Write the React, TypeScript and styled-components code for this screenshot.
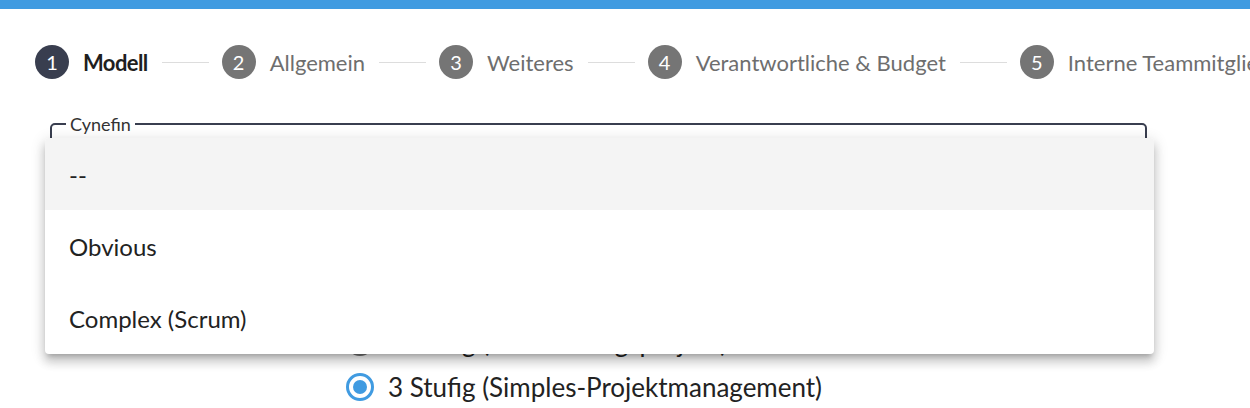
import React from "react";
import styled, { createGlobalStyle } from "styled-components";

const GlobalStyle = createGlobalStyle`
  body {
    margin: 0;
    background: #ffffff;
    font-family: Lato, "Open Sans", "Liberation Sans", sans-serif;
    overflow: hidden;
  }
`;

const TopBar = styled.div`
  height: 9px;
  background: #409be1;
`;

const Stepper = styled.div`
  display: flex;
  align-items: center;
  height: 34px;
  margin-top: 36px;
  padding-left: 35px;
  white-space: nowrap;
`;

const StepCircle = styled.div<{ $active?: boolean }>`
  flex: none;
  width: 34px;
  height: 34px;
  border-radius: 50%;
  display: flex;
  align-items: center;
  justify-content: center;
  background: ${(p) => (p.$active ? "#393e4f" : "#757575")};
  color: #ffffff;
  font-size: 20px;
`;

const StepLabel = styled.span<{ $active?: boolean }>`
  margin-left: 14px;
  font-size: 22px;
  color: ${(p) => (p.$active ? "#1f1f1f" : "#6e6e6e")};
  font-weight: ${(p) => (p.$active ? 700 : 400)};
  letter-spacing: ${(p) => (p.$active ? "-0.6px" : "0")};
`;

const Connector = styled.div`
  flex: none;
  width: 47px;
  height: 1px;
  margin: 0 13px 0 14px;
  background: #dddddd;
`;

const Form = styled.div`
  margin-top: 35px;
  padding: 0 103px 0 50px;
`;

const FieldWrap = styled.div`
  position: relative;
`;

const Outline = styled.fieldset`
  margin: 0;
  height: 66px;
  padding: 0 14px;
  border: 2px solid #393e4f;
  border-radius: 5px;
  box-sizing: border-box;
`;

const Legend = styled.legend`
  padding: 0 4px;
  font-size: 18px;
  line-height: 20px;
  color: #333333;
`;

const Menu = styled.ul`
  position: absolute;
  left: -5px;
  top: 24px;
  width: calc(100% + 12px);
  margin: 0;
  padding: 0;
  list-style: none;
  background: #ffffff;
  border-radius: 4px;
  overflow: hidden;
  box-shadow: 0 5px 5px -3px rgba(0, 0, 0, 0.2),
    0 8px 10px 1px rgba(0, 0, 0, 0.14), 0 3px 14px 2px rgba(0, 0, 0, 0.12);
  z-index: 10;
`;

const MenuItem = styled.li<{ $selected?: boolean }>`
  display: flex;
  align-items: center;
  height: 72px;
  padding: 0 24px;
  font-size: 24px;
  color: #222222;
  background: ${(p) => (p.$selected ? "#f4f4f4" : "transparent")};
`;

const RadioGroup = styled.div`
  margin-top: 94px;
  padding-left: 296px;
`;

const RadioRow = styled.label`
  display: flex;
  align-items: center;
  height: 45px;
  font-size: 26px;
  color: #222222;
`;

const RadioRing = styled.span<{ $checked?: boolean }>`
  flex: none;
  width: 28px;
  height: 28px;
  box-sizing: border-box;
  border-radius: 50%;
  border: 3px solid ${(p) => (p.$checked ? "#409be1" : "#757575")};
  display: flex;
  align-items: center;
  justify-content: center;
  margin-right: 14px;
  &::after {
    content: "";
    width: 14px;
    height: 14px;
    border-radius: 50%;
    background: ${(p) => (p.$checked ? "#409be1" : "transparent")};
  }
`;

const steps = [
  "Modell",
  "Allgemein",
  "Weiteres",
  "Verantwortliche & Budget",
  "Interne Teammitglieder",
];

const options = ["--", "Obvious", "Complex (Scrum)"];

const models = [
  "1 Stufig (Aufgabenliste)",
  "2 Stufig (Entwicklungsprojekt)",
  "3 Stufig (Simples-Projektmanagement)",
];

export default function App() {
  return (
    <>
      <GlobalStyle />
      <TopBar />
      <Stepper>
        {steps.map((label, i) => (
          <React.Fragment key={label}>
            {i > 0 && <Connector />}
            <StepCircle $active={i === 0}>{i + 1}</StepCircle>
            <StepLabel $active={i === 0}>{label}</StepLabel>
          </React.Fragment>
        ))}
      </Stepper>
      <Form>
        <FieldWrap>
          <Outline>
            <Legend>Cynefin</Legend>
          </Outline>
          <Menu>
            {options.map((opt, i) => (
              <MenuItem key={opt} $selected={i === 0}>
                {opt}
              </MenuItem>
            ))}
          </Menu>
        </FieldWrap>
        <RadioGroup>
          {models.map((m, i) => (
            <RadioRow key={m}>
              <RadioRing $checked={i === 2} />
              {m}
            </RadioRow>
          ))}
        </RadioGroup>
      </Form>
    </>
  );
}
